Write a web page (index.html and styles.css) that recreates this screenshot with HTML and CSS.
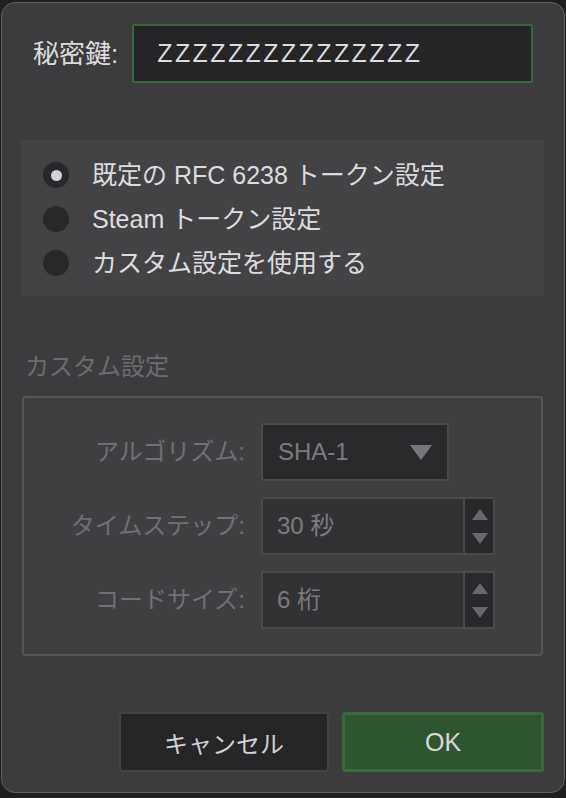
FILE: index.html
```html
<!DOCTYPE html>
<html lang="ja">
<head>
<meta charset="utf-8">
<title>秘密鍵</title>
<link rel="stylesheet" href="styles.css">
</head>
<body>
<div class="window">
  <div class="key-row">
    <span class="key-label">秘密鍵:</span>
    <div class="key-input">ZZZZZZZZZZZZZZZ</div>
  </div>

  <div class="radio-panel">
    <div class="radio-row"><span class="radio checked"></span><span class="radio-text">既定の RFC 6238 トークン設定</span></div>
    <div class="radio-row"><span class="radio"></span><span class="radio-text">Steam トークン設定</span></div>
    <div class="radio-row"><span class="radio"></span><span class="radio-text">カスタム設定を使用する</span></div>
  </div>

  <div class="section-title">カスタム設定</div>

  <div class="custom-box">
    <div class="field-row">
      <span class="field-label">アルゴリズム:</span>
      <div class="combo">
        <span class="value">SHA-1</span>
        <svg class="combo-arrow" width="22" height="15" viewBox="0 0 22 15"><polygon points="0,0 22,0 11,15" fill="#77777b"/></svg>
      </div>
    </div>
    <div class="field-row">
      <span class="field-label">タイムステップ:</span>
      <div class="spin">
        <div class="spin-field"><span class="value">30 秒</span></div>
        <div class="stepper">
          <svg width="16" height="11" viewBox="0 0 16 11"><polygon points="8,0 16,11 0,11" fill="#69696d"/></svg>
          <svg width="16" height="11" viewBox="0 0 16 11"><polygon points="0,0 16,0 8,11" fill="#69696d"/></svg>
        </div>
      </div>
    </div>
    <div class="field-row">
      <span class="field-label">コードサイズ:</span>
      <div class="spin">
        <div class="spin-field"><span class="value">6 桁</span></div>
        <div class="stepper">
          <svg width="16" height="11" viewBox="0 0 16 11"><polygon points="8,0 16,11 0,11" fill="#69696d"/></svg>
          <svg width="16" height="11" viewBox="0 0 16 11"><polygon points="0,0 16,0 8,11" fill="#69696d"/></svg>
        </div>
      </div>
    </div>
  </div>

  <div class="buttons">
    <div class="btn btn-cancel">キャンセル</div>
    <div class="btn btn-ok">OK</div>
  </div>
</div>
</body>
</html>
```

FILE: styles.css
```css
* { box-sizing: border-box; }

html, body {
  margin: 0;
  padding: 0;
}

body {
  background: #1f1f21;
  width: 566px;
  height: 798px;
  overflow: hidden;
  font-family: "Liberation Sans", "Noto Sans CJK JP", sans-serif;
  color: #dcdcde;
}

.window {
  margin: 2px 0 0 1px;
  width: 564px;
  height: 791px;
  background: #3c3c3e;
  border: 1px solid #606063;
  border-radius: 14px;
  padding: 21px 20px 0 19px;
  display: flex;
  flex-direction: column;
}

/* key row */
.key-row {
  display: flex;
  align-items: center;
  gap: 14px;
  padding-left: 12px;
  height: 59px;
}

.key-label {
  font-size: 26px;
  line-height: 30px;
  color: #dcdcde;
}

.key-input {
  width: 401px;
  height: 59px;
  background: #252527;
  border: 2px solid #36693a;
  border-radius: 2px;
  padding-left: 23px;
  display: flex;
  align-items: center;
  font-size: 25px;
  letter-spacing: 2.4px;
  color: #dcdcde;
}

/* radio panel */
.radio-panel {
  margin-top: 57px;
  height: 156px;
  background: #434346;
  padding: 13px 0 0 22px;
  display: flex;
  flex-direction: column;
}

.radio-row {
  height: 44px;
  display: flex;
  align-items: center;
  gap: 23px;
}

.radio {
  width: 26px;
  height: 26px;
  border-radius: 50%;
  background: #28282a;
  display: flex;
  align-items: center;
  justify-content: center;
}

.radio.checked::after {
  content: "";
  width: 11px;
  height: 11px;
  border-radius: 50%;
  background: #d4d4d8;
}

.radio-text {
  font-size: 25px;
  line-height: 30px;
  color: #dcdcde;
}

/* custom settings */
.section-title {
  margin-top: 56px;
  padding-left: 4px;
  font-size: 24px;
  line-height: 30px;
  color: #6c6c70;
}

.custom-box {
  margin: 14px 1px 0 1px;
  height: 260px;
  background: #3f3f42;
  border: 2px solid #555558;
  border-radius: 3px;
  padding-top: 25px;
  display: flex;
  flex-direction: column;
  gap: 16px;
}

.field-row {
  display: grid;
  grid-template-columns: 221px auto;
  column-gap: 16px;
  align-items: center;
  height: 58px;
}

.field-label {
  text-align: right;
  font-size: 24px;
  line-height: 30px;
  color: #707074;
}

.value {
  font-size: 24px;
  line-height: 30px;
  color: #7b7b7f;
}

.combo {
  width: 188px;
  height: 58px;
  background: #2a2a2c;
  border: 2px solid #4a4a4d;
  border-radius: 2px;
  padding: 0 15px 0 15px;
  display: flex;
  align-items: center;
  justify-content: space-between;
}

.spin {
  width: 234px;
  height: 58px;
  border: 2px solid #4a4a4d;
  border-radius: 2px;
  display: flex;
}

.spin-field {
  flex: 1;
  background: #323235;
  border-right: 2px solid #4a4a4d;
  padding-left: 14px;
  display: flex;
  align-items: center;
}

.stepper {
  width: 28px;
  background: #29292b;
  display: flex;
  flex-direction: column;
  align-items: center;
  justify-content: center;
  gap: 13px;
  padding-left: 1px;
}

.stepper svg { display: block; }

/* buttons */
.buttons {
  margin-top: 56px;
  display: flex;
  justify-content: flex-end;
  gap: 13px;
}

.btn {
  height: 60px;
  display: flex;
  align-items: center;
  justify-content: center;
  font-size: 24px;
  border-radius: 3px;
}

.btn-cancel {
  width: 210px;
  background: #262628;
  border: 2px solid #434345;
  color: #d2d2d4;
}

.btn-ok {
  width: 202px;
  background: #2f5530;
  border: 3px solid #3a6a3b;
  color: #d8d8da;
  font-size: 25px;
}
```
